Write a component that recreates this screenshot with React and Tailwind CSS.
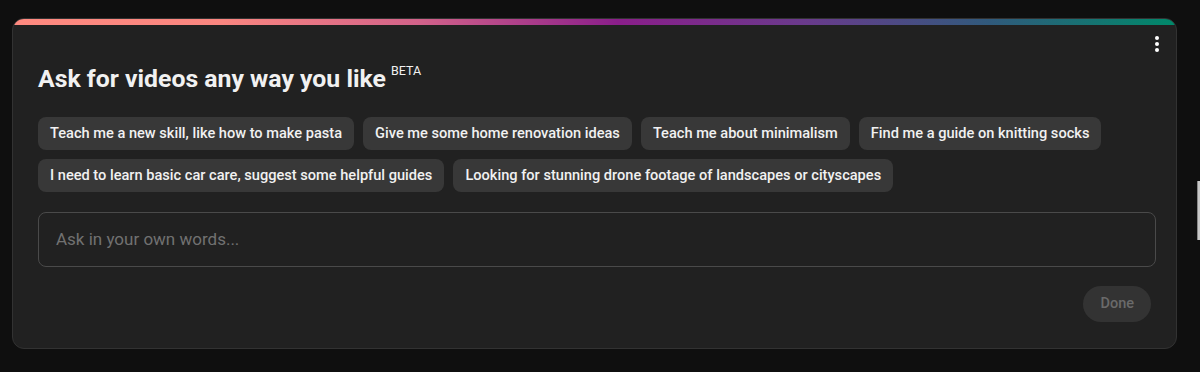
export default function App() {
  const row1 = [
    "Teach me a new skill, like how to make pasta",
    "Give me some home renovation ideas",
    "Teach me about minimalism",
    "Find me a guide on knitting socks",
  ];
  const row2 = [
    "I need to learn basic car care, suggest some helpful guides",
    "Looking for stunning drone footage of landscapes or cityscapes",
  ];
  const Chip = ({ c }) => (
    <button className="h-[33px] px-[12px] rounded-[8px] bg-[#383838] text-[14.6px] font-medium text-[#f1f1f1] whitespace-nowrap">
      {c}
    </button>
  );
  return (
    <div className="relative w-[1200px] h-[372px] bg-[#0f0f0f] pt-[18px] pl-[12px]" style={{ fontFamily: "Roboto, 'Noto Sans', sans-serif" }}>
      <div className="w-[1165px] h-[331px] rounded-[12px] bg-[#212121] border border-[#323232] overflow-hidden flex flex-col">
        <div className="h-[6px] shrink-0 bg-[linear-gradient(to_right,#ff8a80_0%,#fa8680_18%,#d2628a_35%,#8a1e8a_52%,#6a3a8c_68%,#305a7c_84%,#00896a_100%)]" />
        <div className="relative flex flex-col pl-[25px] pr-[20px]">
          <button className="absolute right-[14px] top-[9px] w-[10px] h-[20px] flex flex-col items-center justify-center gap-[2px]">
            <span className="w-[4px] h-[4px] rounded-full bg-white" />
            <span className="w-[4px] h-[4px] rounded-full bg-white" />
            <span className="w-[4px] h-[4px] rounded-full bg-white" />
          </button>
          <div className="mt-[38px] flex items-start">
            <h1 className="text-[24.8px] leading-[32px] font-bold text-[#f1f1f1]">Ask for videos any way you like</h1>
            <span className="ml-[5px] mt-[1px] text-[12.5px] leading-[14px] text-[#f1f1f1]">BETA</span>
          </div>
          <div className="mt-[22px] flex flex-col gap-[9px]">
            <div className="flex gap-[9px]">
              {row1.map((c) => <Chip key={c} c={c} />)}
            </div>
            <div className="flex gap-[9px]">
              {row2.map((c) => <Chip key={c} c={c} />)}
            </div>
          </div>
          <div className="mt-[20px] h-[55px] rounded-[8px] border border-[#4a4a4a] flex items-center px-[17px]">
            <span className="text-[17px] text-[#717171]">Ask in your own words...</span>
          </div>
          <div className="mt-[19px] flex justify-end pr-[5px]">
            <button className="h-[36px] px-[17px] rounded-full bg-[#333333] text-[14.5px] font-medium text-[#6a6a6a]">Done</button>
          </div>
        </div>
      </div>
      <div className="absolute right-0 top-[181px] w-[3px] h-[59px] bg-[#c8c8c8] border-l border-[#888]" />
    </div>
  );
}
